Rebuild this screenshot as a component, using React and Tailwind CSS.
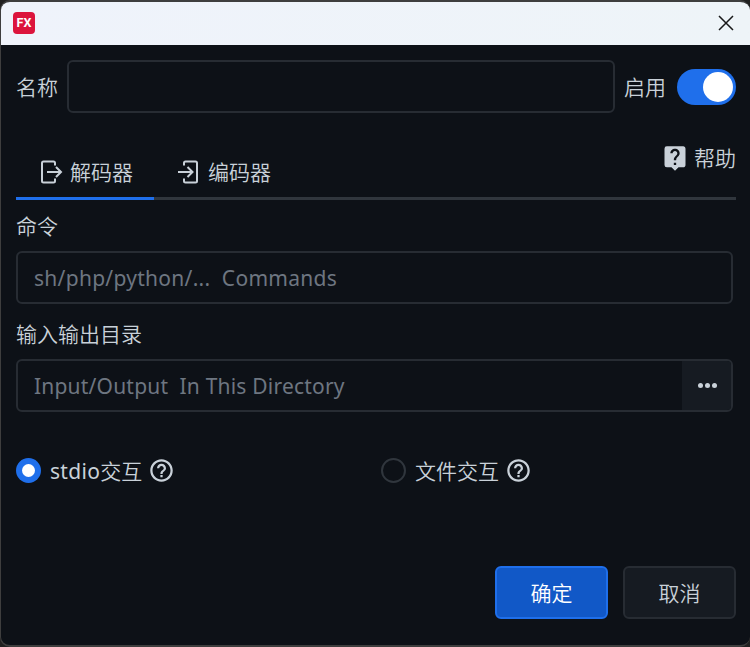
import React from "react";
import { MdLiveHelp, MdHelpOutline } from "react-icons/md";

function ExportIcon() {
  return (
    <svg width="24" height="26" viewBox="0 0 24 26" fill="none" stroke="#c9d1d9" strokeWidth="2" className="mt-px shrink-0">
      <path d="M15 6.5V4Q15 2.5 13.5 2.5H3.5Q2 2.5 2 4V22Q2 23.5 3.5 23.5H13.5Q15 23.5 15 22V19.5" />
      <path d="M7 13H21M16 8L21 13L16 18" />
    </svg>
  );
}

function ImportIcon() {
  return (
    <svg width="24" height="26" viewBox="0 0 24 26" fill="none" stroke="#c9d1d9" strokeWidth="2" className="mt-px shrink-0">
      <path d="M6 6.5V4Q6 2.5 7.5 2.5H17.5Q19 2.5 19 4V22Q19 23.5 17.5 23.5H7.5Q6 23.5 6 22V19.5" />
      <path d="M0 13H14M9.5 8L14.5 13L9.5 18" />
    </svg>
  );
}

function Option({ checked, label, className }) {
  return (
    <div className={"flex h-[26px] items-center " + className}>
      {checked ? (
        <span className="flex size-[25px] shrink-0 items-center justify-center rounded-full bg-[#1f6feb]">
          <span className="size-[13px] rounded-full bg-white" />
        </span>
      ) : (
        <span className="size-[25px] shrink-0 rounded-full border-2 border-[#30363d]" />
      )}
      <span className="mt-px ml-[9px] whitespace-nowrap">{label}</span>
      <MdHelpOutline size={27} className="ml-[6px] shrink-0" />
    </div>
  );
}

export default function App() {
  return (
    <div className="h-[647px] w-[750px] bg-[#202020] font-['Noto_Sans','Noto_Sans_CJK_SC',sans-serif] text-[21px] leading-[30px] font-[350] text-[#c9d1d9]">
      <div className="flex h-[647px] w-[750px] flex-col overflow-hidden rounded-[10px] border-t-2 border-b-2 border-l border-[#3e3e3e] bg-[#0d1117]">
        <header className="flex h-[43px] shrink-0 items-center justify-between bg-gradient-to-r from-[#eff3fb] to-[#eef4f8] pr-4 pl-3">
          <span className="mb-[2px] flex size-[22px] items-center justify-center rounded-[4px] bg-[#dc143c] pt-px font-['Roboto',sans-serif] text-[12.5px] leading-none font-bold text-white">
            FX
          </span>
          <svg width="16" height="16" viewBox="0 0 16 16" stroke="#191919" strokeWidth="1.5" className="mb-[2px]">
            <path d="M1 1L15 15M15 1L1 15" />
          </svg>
        </header>

        <main className="flex flex-1 flex-col pr-[14px] pl-[15px]">
          <div className="mt-[15px] flex h-[53px] items-center">
            <span>名称</span>
            <input className="ml-[9px] h-[53px] w-[548px] rounded-[6px] border-2 border-[#272c33] bg-transparent px-4 outline-none" />
            <span className="ml-[9px]">启用</span>
            <span className="ml-[11px] flex h-9 w-[59px] items-center justify-end rounded-full bg-[#1f6feb] pr-[3px]">
              <span className="size-[30px] rounded-full bg-white" />
            </span>
          </div>

          <nav className="mt-[32px] flex h-[55px] justify-between border-b-[3px] border-[#30363d]">
            <div className="flex h-[55px]">
              <div className="flex w-[138px] items-center border-b-[3px] border-[#1f6feb] pl-6">
                <ExportIcon />
                <span className="mt-[2px] ml-[6px]">解码器</span>
              </div>
              <div className="flex h-[52px] items-center pl-6">
                <ImportIcon />
                <span className="mt-[2px] ml-[6px]">编码器</span>
              </div>
            </div>
            <div className="-mt-[1px] flex h-[28px] items-center">
              <MdLiveHelp size={28} />
              <span className="ml-[5px]">帮助</span>
            </div>
          </nav>

          <label className="mt-[11px] h-[30px]">命令</label>
          <div className="mt-[10px] flex h-[53px] w-[717px] items-center rounded-[6px] border-2 border-[#272c33] pl-4 text-[#6e7681]">
            <span className="font-normal tracking-[0.28px] whitespace-pre">{"sh/php/python/...  Commands"}</span>
          </div>

          <label className="mt-[15px] h-[30px]">输入输出目录</label>
          <div className="mt-[10px] flex h-[53px] w-[717px] items-center justify-between overflow-hidden rounded-[6px] border-2 border-[#272c33] pl-4 text-[#6e7681]">
            <span className="font-normal tracking-[0.2px] whitespace-pre">{"Input/Output  In This Directory"}</span>
            <button className="flex h-full w-[49px] items-center justify-center gap-[2px] bg-[#161b22] pl-px">
              <span className="size-[5px] rounded-full bg-[#c9d1d9]" />
              <span className="size-[5px] rounded-full bg-[#c9d1d9]" />
              <span className="size-[5px] rounded-full bg-[#c9d1d9]" />
            </button>
          </div>

          <div className="mt-[45px] flex">
            <Option
              checked
              label={
                <>
                  <span className="font-normal tracking-[0.3px]">stdio</span>交互
                </>
              }
              className="w-[365px]"
            />
            <Option label="文件交互" className="" />
          </div>

          <div className="mt-[83px] flex justify-end gap-[15px]">
            <button className="h-[53px] w-[113px] rounded-[6px] border-2 border-[#1f6feb] bg-[#1158c7] text-white">确定</button>
            <button className="h-[53px] w-[113px] rounded-[6px] border-2 border-[#272c33] bg-[#161b22]">取消</button>
          </div>
        </main>
      </div>
    </div>
  );
}
